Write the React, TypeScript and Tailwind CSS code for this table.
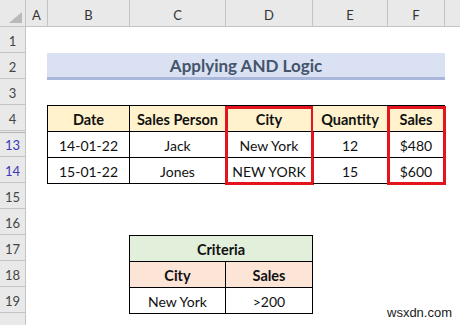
import React from "react";

const hdrBorder = "border-[#c4c4c4]";

function ColHeader() {
  const cols: [string, string][] = [
    ["A", "w-[22px]"],
    ["B", "w-[82px]"],
    ["C", "w-[96px]"],
    ["D", "w-[87px]"],
    ["E", "w-[75px]"],
    ["F", "w-[57px]"],
  ];
  return (
    <div className={`flex h-[27px] bg-[#e9e9e9] border-b ${hdrBorder} text-[13px] text-[#333]`}>
      <div className={`w-[26px] flex-none border-r ${hdrBorder} flex items-end justify-end pb-[3px] pr-[3px]`}>
        <svg width="13" height="11" viewBox="0 0 13 11">
          <polygon points="13,0 13,11 0,11" fill="#b9b9b9" />
        </svg>
      </div>
      {cols.map(([l, w]) => (
        <div key={l} className={`${w} flex-none border-r ${hdrBorder} flex items-center justify-center pt-[5px]`}>
          {l}
        </div>
      ))}
      <div className="flex-1" />
    </div>
  );
}

function RowHeader() {
  const rows = [
    { n: "1" },
    { n: "2" },
    { n: "3" },
    { n: "4" },
    { n: "13", blue: true, dbl: true },
    { n: "14", blue: true },
    { n: "15" },
    { n: "16" },
    { n: "17" },
    { n: "18" },
    { n: "19" },
    { n: "" },
  ];
  return (
    <div className={`w-[26px] flex-none border-r ${hdrBorder} bg-[#e9e9e9] text-[13px]`}>
      {rows.map((r, i) => (
        <div
          key={i}
          className={`h-[26px] border-b ${hdrBorder} flex items-center justify-center pt-[5px] ${
            r.blue ? "text-[#3a3ab8]" : "text-[#444]"
          } ${r.dbl ? "shadow-[inset_0_1px_0_#e9e9e9,inset_0_2px_0_#b4b4b4]" : ""}`}
        >
          {r.n}
        </div>
      ))}
    </div>
  );
}

type Col = { w: string; head: string; vals: string[]; red?: boolean };

function DataTable() {
  const cols: Col[] = [
    { w: "w-[82px]", head: "Date", vals: ["14-01-22", "15-01-22"] },
    { w: "w-[96px]", head: "Sales Person", vals: ["Jack", "Jones"] },
    { w: "w-[87px]", head: "City", vals: ["New York", "NEW YORK"], red: true },
    { w: "w-[75px]", head: "Quantity", vals: ["12", "15"] },
    { w: "w-[57px]", head: "Sales", vals: ["$480", "$600"], red: true },
  ];
  return (
    <div className="ml-[21px] flex w-fit border-t border-l border-black text-[14px]">
      {cols.map((c) => (
        <div key={c.head} className={`${c.w} flex-none relative flex flex-col`}>
          <div className="h-[26px] border-r border-b border-black bg-[#fff2cc] font-bold text-[14.5px] flex items-center justify-center pt-[2px]">
            {c.head}
          </div>
          {c.vals.map((v) => (
            <div key={v} className="h-[26px] border-r border-b border-black flex items-center justify-center pt-[2px]">
              {v}
            </div>
          ))}
          {c.red && (
            <div className="absolute top-0 bottom-[-1px] left-[-1px] right-[-1px] border-[3px] border-[#e3141b]" />
          )}
        </div>
      ))}
    </div>
  );
}

function CriteriaTable() {
  return (
    <div className="ml-[103px] w-fit flex flex-col border-t border-l border-black text-[14px]">
      <div className="w-[183px] h-[26px] border-r border-b border-black bg-[#e2efda] font-bold text-[14.5px] flex items-center justify-center pt-[2px]">
        Criteria
      </div>
      <div className="flex">
        <div className="w-[96px] h-[26px] border-r border-b border-black bg-[#fce4d6] font-bold text-[14.5px] flex items-center justify-center pt-[2px]">
          City
        </div>
        <div className="w-[87px] h-[26px] border-r border-b border-black bg-[#fce4d6] font-bold text-[14.5px] flex items-center justify-center pt-[2px]">
          Sales
        </div>
      </div>
      <div className="flex">
        <div className="w-[96px] h-[26px] border-r border-b border-black flex items-center justify-center pt-[2px]">
          New York
        </div>
        <div className="w-[87px] h-[26px] border-r border-b border-black flex items-center justify-center pt-[2px]">
          &gt;200
        </div>
      </div>
    </div>
  );
}

export default function App() {
  return (
    <div className="relative w-[460px] h-[325px] overflow-hidden bg-white font-['Lato',sans-serif] text-[#111]">
      <ColHeader />
      <div className="flex">
        <RowHeader />
        <div className="flex-1 flex flex-col">
          <div className="h-[26px]" />
          <div className="h-[26px]">
            <div className="ml-[21px] w-[398px] h-[27px] bg-[#d9e1f2] border-b-[3px] border-[#a9b7db] flex items-center justify-center pt-[1px] text-[17px] font-bold text-[#44546a]">
              Applying AND Logic
            </div>
          </div>
          <div className="h-[26px]" />
          <DataTable />
          <div className="h-[25px]" />
          <div className="h-[26px]" />
          <CriteriaTable />
        </div>
      </div>
      <div className="absolute left-[387px] top-[305px] text-[13px] leading-[15px] text-[#222] font-['Liberation_Sans',Arial,sans-serif]">
        wsxdn.com
      </div>
    </div>
  );
}
